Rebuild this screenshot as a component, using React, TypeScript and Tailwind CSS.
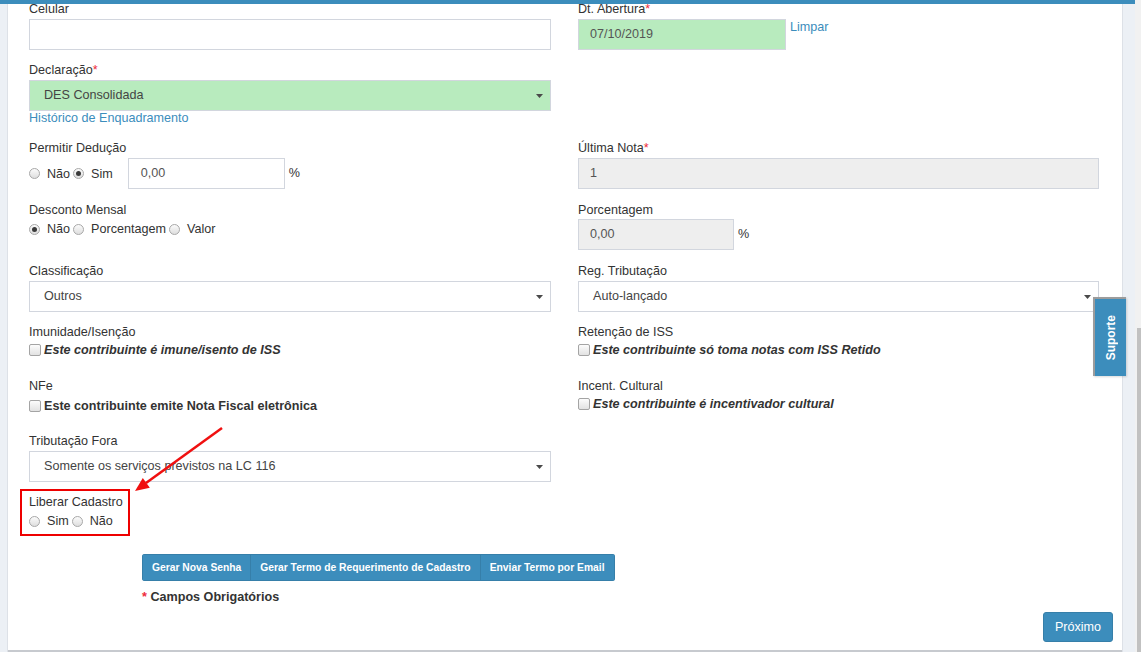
import React from 'react'

const Req = () => <span className="text-[#ee2a3c]">*</span>

const Label = ({ children, className = '' }: { children: React.ReactNode; className?: string }) => (
  <div className={`h-[18px] leading-[18px] ${className}`}>{children}</div>
)

const Radio = ({ checked }: { checked?: boolean }) => (
  <span className="inline-flex h-[11px] w-[11px] shrink-0 items-center justify-center rounded-full border border-[#a8a8a8] bg-linear-to-b from-[#fbfbfb] to-[#dedede]">
    {checked && <span className="h-[5px] w-[5px] rounded-full bg-[#3a3a3a]" />}
  </span>
)

const Check = () => (
  <span className="inline-block h-[12px] w-[12px] shrink-0 rounded-[2px] border border-[#a4a4a4] bg-linear-to-b from-[#fcfcfc] to-[#e2e2e2]" />
)

const Arrow = () => (
  <svg width="7" height="4" viewBox="0 0 7 4" className="shrink-0">
    <path d="M0 0h7L3.5 4z" fill="#4a4a4a" />
  </svg>
)

const Select = ({ value, green = false }: { value: string; green?: boolean }) => (
  <div
    className={`flex h-[31px] items-center justify-between border border-[#d2d6de] pl-[14px] pr-[7px] text-[#444] ${
      green ? 'bg-[#b8ebbe]' : 'bg-white'
    }`}
  >
    <span>{value}</span>
    <Arrow />
  </div>
)

const RadioGroup = ({ options, checked }: { options: string[]; checked: number }) => (
  <div className="flex h-[18px] items-center leading-[18px]">
    {options.map((o, i) => (
      <React.Fragment key={o}>
        <Radio checked={i === checked} />
        <span className="ml-[7px] mr-[3px]">{o}</span>
      </React.Fragment>
    ))}
  </div>
)

const CheckRow = ({ text, italic = true }: { text: string; italic?: boolean }) => (
  <div className="flex h-[18px] items-center leading-[18px]">
    <Check />
    <span className={`ml-[3px] font-bold ${italic ? 'italic' : ''}`}>{text}</span>
  </div>
)

export default function App() {
  return (
    <div className="relative h-[652px] w-[1141px] overflow-hidden bg-white font-['Liberation_Sans',Arial,sans-serif] text-[12.6px] text-[#333]">
      <div className="flex h-full">
        <div className="w-[8px] border-r border-[#dde1e7] bg-[#ecf0f5]" />

        <div className="w-[1114px] border-b-2 border-[#c7cacf] pl-[21px] pr-[23px]">
          {/* Celular / Dt. Abertura */}
          <div className="grid grid-cols-[522px_521px] gap-x-[27px]">
            <div>
              <Label>Celular</Label>
              <div className="mt-[1px] h-[31px] border border-[#d2d6de] bg-white" />
            </div>
            <div>
              <Label>
                Dt. Abertura<Req />
              </Label>
              <div className="mt-[1px] flex items-start">
                <div className="flex h-[31px] w-[208px] items-center border border-[#d2d6de] bg-[#b8ebbe] pl-[11px] text-[#555]">
                  07/10/2019
                </div>
                <a className="ml-[4px] leading-[16px] text-[#3c8dbc]">Limpar</a>
              </div>
            </div>
          </div>

          {/* Declaração */}
          <div className="mt-[11px] w-[522px]">
            <Label>
              Declaração<Req />
            </Label>
            <div className="mt-[1px]">
              <Select value="DES Consolidada" green />
            </div>
            <a className="block leading-[15px] text-[#3c8dbc]">Histórico de Enquadramento</a>
          </div>

          {/* Permitir Dedução / Última Nota */}
          <div className="mt-[13px] grid grid-cols-[522px_521px] gap-x-[27px]">
            <div>
              <Label>Permitir Dedução</Label>
              <div className="mt-[1px] flex items-center">
                <RadioGroup options={['Não', 'Sim']} checked={1} />
                <div className="ml-[12px] flex h-[31px] w-[157px] items-center border border-[#d2d6de] pl-[12px] text-[#555]">
                  0,00
                </div>
                <span className="ml-[4px]">%</span>
              </div>
            </div>
            <div>
              <Label>
                Última Nota<Req />
              </Label>
              <div className="mt-[1px] flex h-[31px] items-center border border-[#d2d6de] bg-[#eeeeee] pl-[11px] text-[#555]">
                1
              </div>
            </div>
          </div>

          {/* Desconto Mensal / Porcentagem */}
          <div className="mt-[12px] grid grid-cols-[522px_521px] gap-x-[27px]">
            <div>
              <Label>Desconto Mensal</Label>
              <div className="mt-[1px]">
                <RadioGroup options={['Não', 'Porcentagem', 'Valor']} checked={0} />
              </div>
            </div>
            <div>
              <Label>Porcentagem</Label>
              <div className="flex items-center">
                <div className="flex h-[31px] w-[156px] items-center border border-[#d2d6de] bg-[#eeeeee] pl-[11px] text-[#555]">
                  0,00
                </div>
                <span className="ml-[4px]">%</span>
              </div>
            </div>
          </div>

          {/* Classificação / Reg. Tributação */}
          <div className="mt-[12px] grid grid-cols-[522px_521px] gap-x-[27px]">
            <div>
              <Label>Classificação</Label>
              <div className="mt-[1px]">
                <Select value="Outros" />
              </div>
            </div>
            <div>
              <Label>Reg. Tributação</Label>
              <div className="mt-[1px]">
                <Select value="Auto-lançado" />
              </div>
            </div>
          </div>

          {/* Imunidade / Retenção */}
          <div className="mt-[11px] grid grid-cols-[522px_521px] gap-x-[27px]">
            <div>
              <Label>Imunidade/Isenção</Label>
              <CheckRow text="Este contribuinte é imune/isento de ISS" />
            </div>
            <div>
              <Label>Retenção de ISS</Label>
              <CheckRow text="Este contribuinte só toma notas com ISS Retido" />
            </div>
          </div>

          {/* NFe / Incent. Cultural */}
          <div className="mt-[18px] grid grid-cols-[522px_521px] gap-x-[27px]">
            <div>
              <Label>NFe</Label>
              <div className="mt-[2px]">
                <CheckRow text="Este contribuinte emite Nota Fiscal eletrônica" italic={false} />
              </div>
            </div>
            <div>
              <Label>Incent. Cultural</Label>
              <CheckRow text="Este contribuinte é incentivador cultural" />
            </div>
          </div>

          {/* Tributação Fora */}
          <div className="mt-[17px] w-[522px]">
            <Label>Tributação Fora</Label>
            <div className="mt-[1px]">
              <Select value="Somente os serviços previstos na LC 116" />
            </div>
          </div>

          {/* Liberar Cadastro */}
          <div className="ml-[-9px] mt-[7px] h-[47px] w-[110px] border-2 border-[#ee0000] pl-[7px] pt-[2px]">
            <Label>Liberar Cadastro</Label>
            <div className="mt-[1px]">
              <RadioGroup options={['Sim', 'Não']} checked={-1} />
            </div>
          </div>

          {/* Botões */}
          <div className="ml-[113px] mt-[18px] flex h-[27px] w-fit overflow-hidden rounded-[3px] text-[10.3px] font-bold text-white">
            <button className="border border-[#367fa9] bg-[#3c8dbc] px-[9px]">Gerar Nova Senha</button>
            <button className="border-y border-r border-[#367fa9] bg-[#3c8dbc] px-[9px]">
              Gerar Termo de Requerimento de Cadastro
            </button>
            <button className="border-y border-r border-[#367fa9] bg-[#3c8dbc] px-[9px]">Enviar Termo por Email</button>
          </div>

          <div className="ml-[113px] mt-[7px] h-[18px] font-bold leading-[18px]">
            <Req /> Campos Obrigatórios
          </div>

          <div className="mr-[-14px] mt-[6px] flex justify-end">
            <button className="h-[30px] w-[70px] rounded-[3px] border border-[#367fa9] bg-[#3c8dbc] text-white">
              Próximo
            </button>
          </div>
        </div>

        <div className="w-[13px] border-l border-[#dde1e7] bg-[#ecf0f5]" />
        <div className="relative w-[6px] bg-[#f1f1f1]">
          <div className="absolute left-[2px] top-[328px] h-[330px] w-[4px] bg-[#c1c1c1]" />
        </div>
      </div>

      {/* barra superior fixa */}
      <div className="absolute left-0 top-0 h-[4px] w-[1135px] bg-[#3c8dbc]" />

      {/* aba Suporte */}
      <div className="absolute left-[1093px] top-[297px] flex h-[79px] w-[33px] items-center justify-center border-l-2 border-t-2 border-[#9c9c9c] bg-[#3c8dbc] shadow-[1px_1px_2px_rgba(0,0,0,0.15)]">
        <span className="rotate-180 text-[12px] font-bold text-white [writing-mode:vertical-rl]">Suporte</span>
      </div>

      {/* seta vermelha */}
      <svg className="pointer-events-none absolute left-0 top-0" width="1141" height="652">
        <line x1="222" y1="428" x2="146" y2="483" stroke="#f01010" strokeWidth="2.5" />
        <polygon points="135,491 149.8,487.7 142.8,477.9" fill="#f01010" />
      </svg>
    </div>
  )
}
